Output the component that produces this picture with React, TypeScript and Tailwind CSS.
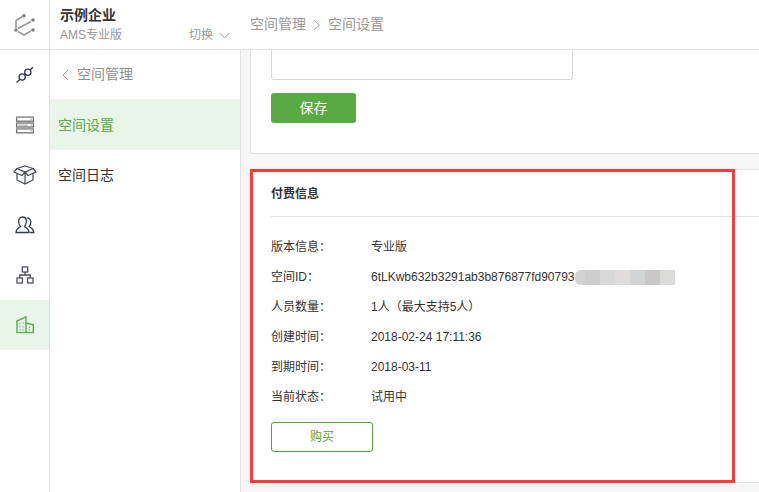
const font = { fontFamily: '"Liberation Sans", "Noto Sans CJK SC", sans-serif' };

function Logo() {
  return (
    <svg width="22" height="22" viewBox="0 0 22 22" fill="none" stroke="#999999" strokeWidth="1.6">
      <path d="M8.5 2.5 L2 6.5 V14" />
      <path d="M4 14.5 L17 7.5" />
      <path d="M4 17.5 L10 21 L17 17" />
      <g fill="#808080" stroke="none">
        <circle cx="10" cy="1.8" r="1.8" />
        <circle cx="19" cy="6" r="1.8" />
        <circle cx="2" cy="16" r="1.8" />
        <circle cx="19" cy="16" r="1.8" />
      </g>
    </svg>
  );
}

const railIcons = [
  <svg key="a" width="20" height="20" viewBox="0 0 20 20" fill="none" stroke="#333a48" strokeWidth="1.3">
    <circle cx="7.2" cy="12" r="3.1" />
    <circle cx="12.8" cy="7.2" r="3.1" />
    <path d="M9.4 9.8 L10.6 9.2 M1.5 17.5 L5 14.3 M15.2 5 L17.8 2.2" />
  </svg>,
  <svg key="b" width="20" height="18" viewBox="0 0 20 18" fill="none">
    <g stroke="#707070" strokeWidth="1.3" fill="#ffffff">
      <rect x="1.6" y="1.2" width="16.8" height="4" />
      <rect x="1.6" y="7" width="16.8" height="4" />
      <rect x="1.6" y="12.8" width="16.8" height="4" />
    </g>
    <g fill="#a3a3a3">
      <rect x="1" y="0.5" width="18" height="1.2" />
      <rect x="1" y="6.3" width="18" height="1.2" />
      <rect x="1" y="12.2" width="18" height="1.2" />
      <rect x="3" y="8.6" width="10" height="1" />
    </g>
    <g fill="#3f86c8">
      <rect x="15.6" y="2.6" width="1" height="1.2" />
      <rect x="15.6" y="8.4" width="1" height="1.2" />
      <rect x="15.6" y="14.2" width="1" height="1.2" />
    </g>
  </svg>,
  <svg key="c" width="24" height="20" viewBox="0 0 24 20" fill="none" stroke="#474c59" strokeWidth="1.2">
    <path d="M12 1 L20 3.5 L12 7 L4 3.5 Z" />
    <path d="M4 3.5 L1 7 L9 10.5 L12 7 L15 10.5 L23 7 L20 3.5" />
    <path d="M4 8.5 V15 L12 19 L20 15 V8.5" />
    <path d="M12 7 V19" />
  </svg>,
  <svg key="d" width="20" height="18" viewBox="0 0 20 18" fill="none" stroke="#333e52" strokeWidth="1.3">
    <path d="M1 16.5 C1 12.5 4 12 5.5 10.5 C4 9 3.6 7.5 3.6 5.6 C3.6 3 5 1 7.5 1 C10 1 11.4 3 11.4 5.6 C11.4 7.5 11 9 9.5 10.5 C11 12 14 12.5 14 16.5 Z" />
    <path d="M11.5 2 C14 1.6 15.8 3.4 15.8 6 C15.8 7.8 15.2 9.2 14.2 10.4 C15.6 11.6 18.8 12.6 18.8 16.5 H15" />
  </svg>,
  <svg key="e" width="18" height="18" viewBox="0 0 18 18" fill="none" stroke="#544f60" strokeWidth="1.3">
    <rect x="6.3" y="1" width="5.4" height="5" />
    <rect x="1" y="12" width="5.4" height="5" />
    <rect x="11.6" y="12" width="5.4" height="5" />
    <path d="M9 6 V9 M3.7 12 V9 H14.3 V12" />
  </svg>,
  <svg key="f" width="18" height="18" viewBox="0 0 18 18" fill="none" stroke="#58b046" strokeWidth="1.4">
    <path d="M1 16.5 V5 L10 0.8 V16.5" />
    <path d="M10 7 L17.3 8.8 V16.5" />
    <path d="M0.3 16.5 H18" />
    <path d="M4 7 V8.5 M7 6 V7.5 M4 10 V11.5 M7 10 V11.5 M4 13 V14.5 M7 13 V14.5 M13.5 10.5 V12 M13.5 13 V14.5" stroke="#73b8c0" strokeWidth="1.2" />
  </svg>,
];

const rows: [string, React.ReactNode][] = [
  ["版本信息：", "专业版"],
  [
    "空间ID：",
    <span key="id" className="flex items-center">
      6tLKwb632b3291ab3b876877fd90793
      <span className="flex h-[15px] overflow-hidden rounded-l-[6px]">
        <span className="w-[10px] bg-[#d2d2d2]" />
        <span className="w-[15px] bg-[#cecece]" />
        <span className="w-[15px] bg-[#d8d8d8]" />
        <span className="w-[15px] bg-[#e0dcdc]" />
        <span className="w-[15px] bg-[#d2d4d6]" />
        <span className="w-[15px] bg-[#c9c7c7]" />
        <span className="w-[15px] bg-[#dbdbda]" />
      </span>
    </span>,
  ],
  ["人员数量：", "1人（最大支持5人）"],
  ["创建时间：", "2018-02-24 17:11:36"],
  ["到期时间：", "2018-03-11"],
  ["当前状态：", "试用中"],
];

export default function App() {
  return (
    <div className="relative flex h-[492px] w-[759px] flex-col overflow-hidden bg-[#f6f6f6]" style={font}>
      <header className="flex h-[50px] shrink-0 border-b border-[#e2e2e2] bg-white">
        <div className="flex w-[50px] shrink-0 items-center justify-center border-r border-[#e2e2e2]">
          <Logo />
        </div>
        <div className="flex w-[191px] shrink-0 flex-col pl-[10px] pr-[11px] pt-[6px]">
          <div className="text-[14px] leading-[18px] font-bold text-[#333333]">示例企业</div>
          <div className="mt-[3px] flex items-center justify-between text-[12px] leading-[16px] text-[#999999]">
            <span>AMS专业版</span>
            <span className="flex items-center gap-[6px]">
              切换
              <svg width="11" height="7" viewBox="0 0 11 7" fill="none" stroke="#999999" strokeWidth="1">
                <path d="M0.5 0.8 L5.5 5.8 L10.5 0.8" />
              </svg>
            </span>
          </div>
        </div>
        <div className="flex items-center gap-[7px] pl-[9px] text-[14px] text-[#999999]">
          <span>空间管理</span>
          <svg width="8" height="12" viewBox="0 0 8 12" fill="none" stroke="#a0a0a0" strokeWidth="1">
            <path d="M1 1 L6.5 6 L1 11" />
          </svg>
          <span>空间设置</span>
        </div>
      </header>
      <div className="flex min-h-0 flex-1">
        <nav className="flex w-[50px] shrink-0 flex-col border-r border-[#e2e2e2] bg-white">
          {railIcons.map((icon, i) => (
            <div key={i} className={`flex h-[50px] items-center justify-center ${i === 5 ? "bg-[#eaf5ea]" : ""}`}>
              {icon}
            </div>
          ))}
        </nav>
        <aside className="flex w-[191px] shrink-0 flex-col border-r border-[#e2e2e2] bg-white text-[14px]">
          <div className="flex h-[49px] items-center gap-[8px] pl-[12px] text-[#999999]">
            <svg width="7" height="12" viewBox="0 0 7 12" fill="none" stroke="#999999" strokeWidth="1">
              <path d="M6 1 L1 6 L6 11" />
            </svg>
            <span className="text-[#8f8f8f]">空间管理</span>
          </div>
          <div className="flex h-[51px] items-center bg-[#eaf5ea] pl-[8px] pt-[1px] text-[#5aaa45]">空间设置</div>
          <div className="flex h-[50px] items-center pl-[8px] text-[#333333]">空间日志</div>
        </aside>
        <main className="min-w-0 flex-1 pl-[9px] text-[12px] text-[#333333]">
          <section className="h-[104px] rounded-bl-[3px] border-b border-l border-[#e2e2e2] bg-white pl-[20px]">
            <div className="h-[30px] w-[302px] rounded-b-[3px] border-x border-b border-[#d9d9d9]" />
            <button className="mt-[13px] flex h-[30px] w-[85px] items-center justify-center rounded-[3px] bg-[#5aaa43] text-[14px] text-white">
              保存
            </button>
          </section>
          <section className="mt-[15px] h-[314px] border-y border-l border-[#e2e2e2] bg-white pl-[20px]">
            <h2 className="flex h-[47px] items-center border-b border-[#e2e2e2] pt-[2px] text-[12px] font-bold text-[#333333]">
              付费信息
            </h2>
            <dl className="mt-[15px]">
              {rows.map(([label, value]) => (
                <div key={label} className="flex h-[30px] items-center">
                  <dt className="w-[100px] shrink-0">{label}</dt>
                  <dd>{value}</dd>
                </div>
              ))}
            </dl>
            <button className="mt-[10px] flex h-[30px] w-[102px] items-center justify-center rounded-[3px] border border-[#5a9e42] text-[12px] text-[#5a9e42]">
              购买
            </button>
          </section>
        </main>
      </div>
      <div className="pointer-events-none absolute left-[250px] top-[169px] h-[314px] w-[485px] border-[3px] border-[#ff3b3b]" />
    </div>
  );
}
